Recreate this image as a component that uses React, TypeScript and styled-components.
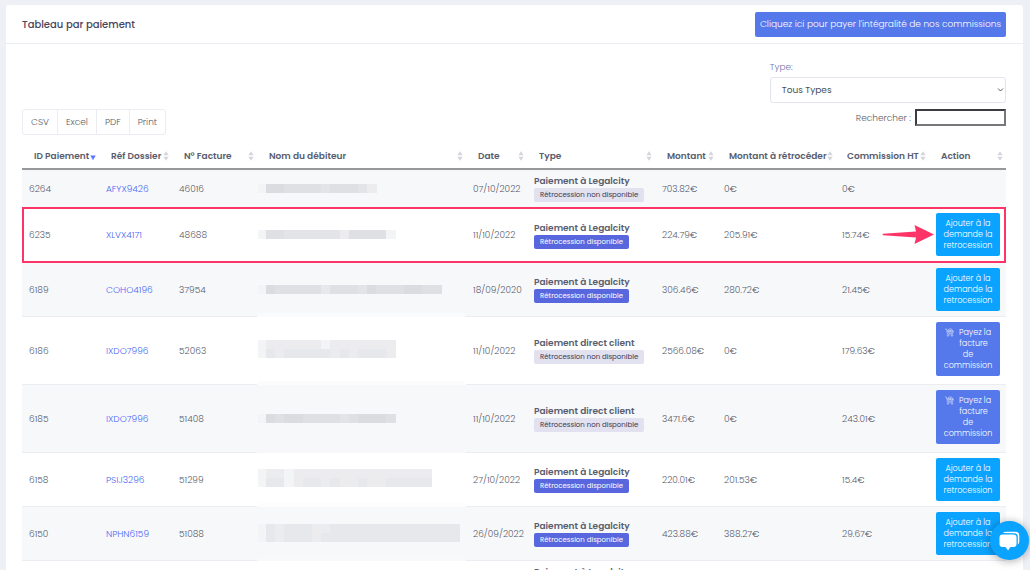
import React from "react";
import styled, { createGlobalStyle, css } from "styled-components";

const Global = createGlobalStyle`
  *, *::before, *::after { box-sizing: border-box; }
  html { overflow: hidden; }
  body {
    margin: 0;
    background: #efeff6;
    color: #575b6a;
    font-family: Poppins, Inter, "Liberation Sans", sans-serif;
    font-size: 9px;
    font-weight: 300;
    line-height: 12px;
    overflow: hidden;
  }
  button, input, select { font: inherit; color: inherit; }
`;

const Page = styled.main`
  padding: 5px 7px 0 6px;
`;

const Card = styled.section`
  background: #fff;
  border-radius: 3px;
`;

const CardHeader = styled.header`
  display: flex;
  align-items: center;
  justify-content: space-between;
  height: 39px;
  padding: 0 17px 0 16px;
  border-bottom: 1px solid #ebedf2;
`;

const Title = styled.h1`
  margin: 0;
  font-size: 10px;
  font-weight: 500;
  line-height: 15px;
  color: #48465b;
`;

const PayAllButton = styled.button`
  height: 25px;
  padding: 0 5px;
  border: 0;
  border-radius: 2px;
  background: #5578eb;
  color: #fff;
  white-space: nowrap;
`;

const CardBody = styled.div`
  padding: 17px 17px 0 16px;
`;

const Filter = styled.div`
  display: flex;
  flex-direction: column;
  width: 24%;
  margin-left: auto;
`;

const FilterLabel = styled.label`
  margin-bottom: 4px;
  color: #7075a6;
`;

const SelectWrap = styled.div`
  position: relative;
  display: flex;

  svg {
    position: absolute;
    right: 2px;
    top: 10px;
    pointer-events: none;
  }
`;

const Select = styled.select`
  width: 100%;
  height: 26px;
  padding: 0 11px;
  border: 1px solid #e2e5ec;
  border-radius: 3px;
  background: #fff;
  color: #495057;
  font-weight: 400;
  appearance: none;
`;

const Tools = styled.div`
  display: flex;
  align-items: flex-start;
  justify-content: space-between;
  padding-top: 6px;
`;

const ExportGroup = styled.div`
  display: flex;
  height: 26px;
  border: 1px solid #ebedf2;
  border-radius: 3px;
`;

const ExportButton = styled.button`
  padding: 0 8px;
  border: 0;
  background: none;

  & + & { border-left: 1px solid #ebedf2; }
`;

const Search = styled.label`
  display: flex;
  align-items: center;
  gap: 4px;
`;

const SearchInput = styled.input`
  width: 91px;
  height: 17px;
  padding: 0 2px;
  border: 2px solid;
  border-color: #3c3c42 #77777c #77777c #3c3c42;
  background: #fff;
`;

const TableWrap = styled.div`
  position: relative;
`;

const Table = styled.table`
  width: 100%;
  margin-top: 8px;
  table-layout: fixed;
  border-collapse: separate;
  border-spacing: 0;
`;

const Th = styled.th`
  height: 27px;
  padding: 0 3px 0 12px;
  border-bottom: 2px solid #98989b;
  color: #595d6e;
  font-weight: 600;
  text-align: left;
  white-space: nowrap;
`;

const ThInner = styled.div`
  display: flex;
  align-items: center;
  justify-content: space-between;

  svg { flex: none; }
`;

const Row = styled.tr<{ $height: number; $odd?: boolean }>`
  height: ${(p) => p.$height}px;
  background: ${(p) => (p.$odd ? "#f7f8fa" : "#fff")};
`;

const Td = styled.td<{ $action?: boolean; $masked?: boolean }>`
  padding: 0 7px;
  border-bottom: 1px solid #ebedf2;
  vertical-align: middle;
  white-space: nowrap;
  ${(p) => p.$action && css`
    padding: 5px 6px 0 7px;
    vertical-align: top;
  `}
  ${(p) => p.$masked && css`
    padding: 0 0 0 1px;
    border-bottom: 0;
    svg { display: block; }
  `}
`;

const FileLink = styled.a`
  color: #4a66f5;
  text-decoration: none;
`;

const Kind = styled.strong`
  display: block;
  font-weight: 600;
  line-height: 13px;
  color: #595d6e;
`;

const Badge = styled.span<{ $on?: boolean }>`
  display: block;
  width: fit-content;
  padding: 1px 6px;
  border-radius: 2px;
  font-size: 7px;
  font-weight: 400;
  line-height: 12px;
  background: ${(p) => (p.$on ? "#5867dd" : "#e1e1ef")};
  color: ${(p) => (p.$on ? "#fff" : "#3b3950")};
`;

const ActionButton = styled.button<{ $pay?: boolean }>`
  display: block;
  width: 100%;
  padding: 5px 0;
  border: 0;
  border-radius: 2px;
  background: ${(p) => (p.$pay ? "#5578eb" : "#0aa3ff")};
  color: #fff;
  font-size: 8px;
  line-height: 11px;
  text-align: center;
`;

const Line = styled.span<{ $indent?: boolean }>`
  display: flex;
  align-items: center;
  justify-content: center;
  gap: 5px;
  padding-left: ${(p) => (p.$indent ? 11 : 0)}px;
`;

/* Frame and arrow drawn over the row that the guide explains */
const FocusArea = styled.div`
  position: absolute;
  top: 64px;
  left: 0;
  right: 0;
  height: 56px;
  border: 2px solid #fc3468;
  pointer-events: none;
`;

const FocusArrow = styled.svg`
  position: absolute;
  right: 69px;
  top: 15px;
`;

const ChatButton = styled.button`
  position: fixed;
  right: 1px;
  bottom: 10px;
  display: flex;
  align-items: center;
  justify-content: center;
  width: 39px;
  height: 39px;
  padding: 0;
  border: 0;
  border-radius: 50%;
  background: #0aa3ff;
  box-shadow: 0 1px 8px rgba(0, 0, 0, 0.35);
`;

const Sort = ({ active }: { active?: boolean }) =>
  active ? (
    <svg width="6" height="10" viewBox="0 0 6 10"><path d="M0.3 4.500h5.400L3 9.300z" fill="#5d78ff" /></svg>
  ) : (
    <svg width="6" height="10" viewBox="0 0 6 10"><path d="M3 0.300 5.700 4.300H.3zM.3 5.700h5.400L3 9.700z" fill="#d5d6dc" /></svg>
  );

const Cart = () => (
  <svg width="9" height="9" viewBox="0 0 18 18" fill="none" stroke="#fff" strokeOpacity="0.75" strokeWidth="1.2">
    <path d="M0 2h3l2 10h10l2-6H4M10.500 3.500v5M8 6h5" />
    <circle cx="10.500" cy="6" r="4.500" />
    <circle cx="6" cy="15" r="1.600" /><circle cx="14" cy="15" r="1.600" />
  </svg>
);

type MaskData = { lines: string[]; y: number; edge: string };

/* Shades from light to dark, one digit for each block of the masked name */
const shades = ["#f3f4f6", "#ececee", "#e7e8eb", "#e3e4e7", "#dfe0e4", "#dbdce0"];

const Mask = ({ mask, height, odd }: { mask: MaskData; height: number; odd: boolean }) => (
  <svg width="206" height={height} shapeRendering="crispEdges" aria-hidden="true">
    <rect width="206" height={height} fill={odd ? "#f7f8fa" : "#fff"} />
    <rect y={height - 4} width="206" height="4" fill={mask.edge} />
    {mask.lines.map((line, r) =>
      line.split("").map((c, i) => (
        <rect
          key={`${r}-${i}`}
          x={i === 0 ? 0 : Math.round(8 + (i - 1) * 9.2)}
          y={mask.y + r * 9}
          width={i === 0 ? 8 : 10}
          height="9"
          fill={shades[Number(c)]}
        />
      ))
    )}
  </svg>
);

type Payment = {
  id: string; file: string; invoice: string; date: string; direct?: boolean;
  on?: boolean; amount: string; back: string; fee: string;
  action?: "add" | "pay"; height: number; mask: MaskData;
};

const payments: Payment[] = [
  { id: "6264", file: "AFYX9426", invoice: "46016", date: "07/10/2022", amount: "703.82€", back: "0€", fee: "0€", height: 38, mask: { y: 14, lines: ["0554444344431"], edge: "#f7f8fa" } },
  { id: "6235", file: "XLVX4171", invoice: "48688", date: "11/10/2022", on: true, amount: "224.79€", back: "205.91€", fee: "15.74€", action: "add", height: 55, mask: { y: 22, lines: ["044333333144440"], edge: "#fff" } },
  { id: "6189", file: "COHO4196", invoice: "37954", date: "18/09/2020", on: true, amount: "306.46€", back: "280.72€", fee: "21.45€", action: "add", height: 54, mask: { y: 22, lines: ["05444442444354445544"], edge: "#fafbfd" } },
  { id: "6186", file: "IXDO7996", invoice: "52063", date: "11/10/2022", direct: true, amount: "2566.08€", back: "0€", fee: "179.63€", action: "pay", height: 68, mask: { y: 23, lines: ["011111101111111", "021222221212221"], edge: "#fcfcfd" } },
  { id: "6185", file: "IXDO7996", invoice: "51408", date: "11/10/2022", direct: true, amount: "3471.6€", back: "0€", fee: "243.01€", action: "pay", height: 68, mask: { y: 29, lines: ["054554444345554"], edge: "#f7f7f9" } },
  { id: "6158", file: "PSIJ3296", invoice: "51299", date: "27/10/2022", on: true, amount: "220.01€", back: "201.53€", fee: "15.4€", action: "add", height: 54, mask: { y: 16, lines: ["0110111111111111111", "0220122121121122222"], edge: "#fdfdfe" } },
  { id: "6150", file: "NPHN6159", invoice: "51088", date: "26/09/2022", on: true, amount: "423.88€", back: "388.27€", fee: "29.67€", action: "add", height: 54, mask: { y: 17, lines: ["0212221122222222222222", "0212221222222222222222"], edge: "#f8f9fb" } },
  { id: "6149", file: "NPHN6159", invoice: "51087", date: "26/09/2022", on: true, amount: "423.88€", back: "388.27€", fee: "29.67€", height: 38, mask: { y: 14, lines: ["0212221122"], edge: "#fdfdfe" } },
];

const columns: [string, number][] = [
  ["ID Paiement", 77], ["Réf Dossier", 73], ["N° Facture", 85], ["Nom du débiteur", 209], ["Date", 61],
  ["Type", 128], ["Montant", 62], ["Montant à rétrocéder", 118], ["Commission HT", 94], ["Action", 77],
];

export default function App() {
  return (
    <Page>
      <Global />
      <Card>
        <CardHeader>
          <Title>Tableau par paiement</Title>
          <PayAllButton>Cliquez ici pour payer l'intégralité de nos commissions</PayAllButton>
        </CardHeader>
        <CardBody>
          <Filter>
            <FilterLabel htmlFor="type">Type:</FilterLabel>
            <SelectWrap>
              <Select id="type"><option>Tous Types</option></Select>
              <svg width="7" height="6" viewBox="0 0 7 6"><path d="M1 1.500 3.500 4 6 1.500" fill="none" stroke="#595d6e" /></svg>
            </SelectWrap>
          </Filter>
          <Tools>
            <ExportGroup>
              {["CSV", "Excel", "PDF", "Print"].map((t) => <ExportButton key={t}>{t}</ExportButton>)}
            </ExportGroup>
            <Search>Rechercher : <SearchInput type="search" /></Search>
          </Tools>
          <TableWrap>
            <Table>
              <colgroup>{columns.map(([n, w]) => <col key={n} width={w} />)}</colgroup>
              <thead>
                <tr>
                  {columns.map(([n], i) => (
                    <Th key={n}><ThInner>{n}<Sort active={i === 0} /></ThInner></Th>
                  ))}
                </tr>
              </thead>
              <tbody>
                {payments.map((p, i) => (
                  <Row key={p.id} $height={p.height} $odd={i % 2 === 0}>
                    <Td>{p.id}</Td>
                    <Td><FileLink href="#">{p.file}</FileLink></Td>
                    <Td>{p.invoice}</Td>
                    <Td $masked><Mask mask={p.mask} height={p.height} odd={i % 2 === 0} /></Td>
                    <Td>{p.date}</Td>
                    <Td>
                      <Kind>{p.direct ? "Paiement direct client" : "Paiement à Legalcity"}</Kind>
                      <Badge $on={p.on}>{p.on ? "Rétrocession disponible" : "Rétrocession non disponible"}</Badge>
                    </Td>
                    <Td>{p.amount}</Td>
                    <Td>{p.back}</Td>
                    <Td>{p.fee}</Td>
                    <Td $action>
                      {p.action === "add" && (
                        <ActionButton><Line>Ajouter à la</Line><Line>demande la</Line><Line>retrocession</Line></ActionButton>
                      )}
                      {p.action === "pay" && (
                        <ActionButton $pay>
                          <Line><Cart />Payez la</Line><Line $indent>facture</Line><Line>de</Line><Line>commission</Line>
                        </ActionButton>
                      )}
                    </Td>
                  </Row>
                ))}
              </tbody>
            </Table>
            <FocusArea>
              <FocusArrow width="53" height="21" viewBox="0 0 53 21">
                <path d="M1 9.700 34 7.500 32.500 1 52 10.500 32.500 20 34 13.600 1 11.200Q0 10.500 1 9.700z" fill="#fc3468" />
              </FocusArrow>
            </FocusArea>
          </TableWrap>
        </CardBody>
      </Card>
      <ChatButton aria-label="Chat">
        <svg width="21" height="20" viewBox="0 0 21 20" fill="#fff">
          <path d="M3.500 3.500h11q3 0 3 3v6.500q0 3-3 3h-3L9 19.500 6.500 16h-3q-3 0-3-3V6.500q0-3 3-3z" />
          <path d="M4 2Q5 .7 7 .7h9.500q3.800 0 3.800 3.800v6q0 2-1.500 3V6q0-3.500-3.500-3.700z" />
        </svg>
      </ChatButton>
    </Page>
  );
}
